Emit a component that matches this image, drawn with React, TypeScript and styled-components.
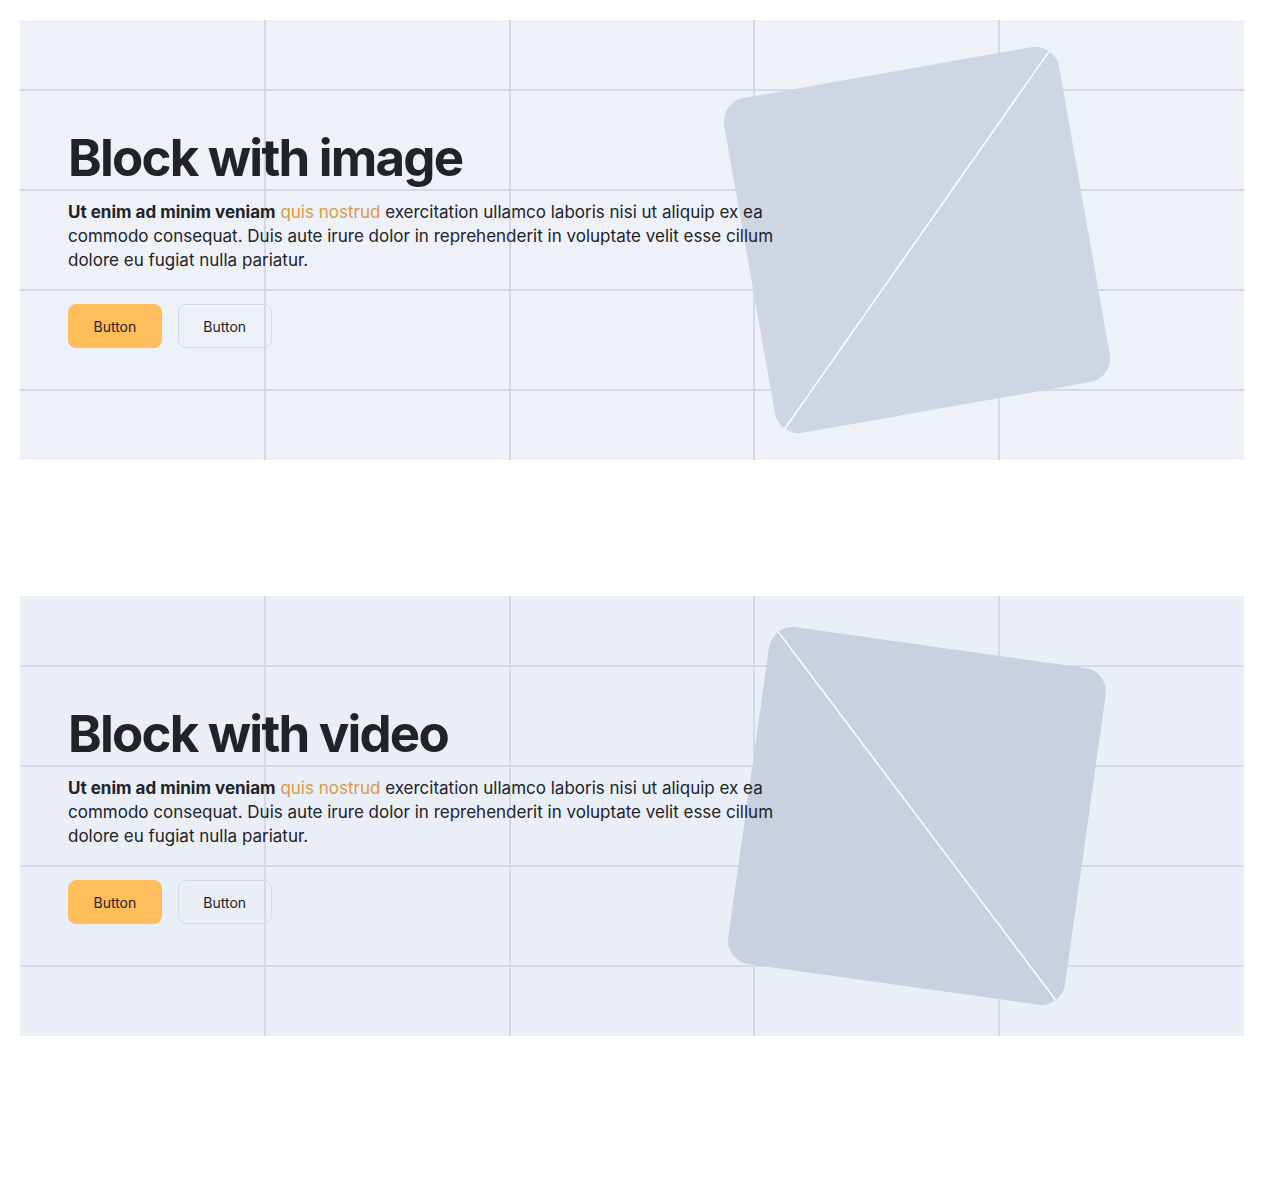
import React from "react";
import styled, { createGlobalStyle } from "styled-components";

const GlobalStyle = createGlobalStyle`
  html, body {
    margin: 0;
    padding: 0;
    background: #ffffff;
  }
  body {
    font-family: Inter, "Noto Sans", "Liberation Sans", sans-serif;
    color: #222326;
    -webkit-font-smoothing: antialiased;
  }
`;

const Page = styled.main`
  display: flex;
  flex-direction: column;
  gap: 136px;
  padding: 20px 20px 156px;
`;

const GRID = "#d3d9e6";

const Hero = styled.section<{ $bg: string }>`
  display: grid;
  grid-template-columns: 1fr;
  grid-template-rows: 440px;
  overflow: hidden;
  background-color: ${(p) => p.$bg};
  background-image:
    linear-gradient(
      to right,
      transparent calc(20% - 1px), ${GRID} calc(20% - 1px), ${GRID} calc(20% + 1px), transparent calc(20% + 1px),
      transparent calc(40% - 1px), ${GRID} calc(40% - 1px), ${GRID} calc(40% + 1px), transparent calc(40% + 1px),
      transparent calc(60% - 1px), ${GRID} calc(60% - 1px), ${GRID} calc(60% + 1px), transparent calc(60% + 1px),
      transparent calc(80% - 1px), ${GRID} calc(80% - 1px), ${GRID} calc(80% + 1px), transparent calc(80% + 1px)
    ),
    repeating-linear-gradient(
      to bottom,
      transparent 0 69px,
      ${GRID} 69px 71px,
      transparent 71px 100px
    );
`;

const Media = styled.div<{ $angle: number; $fill: string }>`
  grid-area: 1 / 1;
  justify-self: end;
  align-self: center;
  margin-right: 157px;
  width: 340px;
  height: 340px;
  border-radius: 24px;
  overflow: hidden;
  background: ${(p) => p.$fill};
  transform: rotate(${(p) => p.$angle}deg);
`;

const Diagonal = styled.svg`
  display: block;
  width: 100%;
  height: 100%;
`;

const Content = styled.div`
  grid-area: 1 / 1;
  align-self: center;
  position: relative;
  z-index: 1;
  padding-left: 48px;
  display: flex;
  flex-direction: column;
`;

const Title = styled.h1`
  margin: 0;
  font-family: Inter, "Noto Sans", "Liberation Sans", sans-serif;
  font-size: 51px;
  line-height: 52px;
  font-weight: 700;
  letter-spacing: -0.035em;
  color: #222326;
`;

const Lead = styled.p`
  margin: 16px 0 0;
  max-width: 720px;
  font-size: 17px;
  line-height: 24px;
  font-weight: 400;
  color: #222326;
`;

const Strong = styled.strong`
  font-weight: 700;
`;

const Accent = styled.span`
  color: #d69a48;
`;

const Actions = styled.div`
  display: flex;
  gap: 16px;
  margin-top: 32px;
`;

const Button = styled.button<{ $primary?: boolean }>`
  height: 44px;
  padding: 0 24.5px;
  border-radius: 8px;
  font-family: Inter, "Noto Sans", "Liberation Sans", sans-serif;
  font-size: 14px;
  font-weight: 400;
  color: #1f2024;
  cursor: pointer;
  background: ${(p) => (p.$primary ? "#ffbe5b" : "transparent")};
  border: 1px solid ${(p) => (p.$primary ? "#ffbe5b" : "#d4d9e2")};
`;

type BlockProps = {
  title: string;
  bg: string;
  fill: string;
  angle: number;
  flip?: boolean;
};

function Block({ title, bg, fill, angle, flip }: BlockProps) {
  return (
    <Hero $bg={bg}>
      <Media $angle={angle} $fill={fill}>
        <Diagonal viewBox="0 0 100 100" preserveAspectRatio="none">
          <line
            x1={flip ? 0 : 100}
            y1={0}
            x2={flip ? 100 : 0}
            y2={100}
            stroke="#ffffff"
            strokeWidth={1.6}
            vectorEffect="non-scaling-stroke"
            opacity={0.9}
          />
        </Diagonal>
      </Media>
      <Content>
        <Title>{title}</Title>
        <Lead>
          <Strong>Ut enim ad minim veniam</Strong> <Accent>quis nostrud</Accent>{" "}
          exercitation ullamco laboris nisi ut aliquip ex ea commodo consequat. Duis aute
          irure dolor in reprehenderit in voluptate velit esse cillum dolore eu fugiat nulla
          pariatur.
        </Lead>
        <Actions>
          <Button $primary>Button</Button>
          <Button>Button</Button>
        </Actions>
      </Content>
    </Hero>
  );
}

export default function App() {
  return (
    <>
      <GlobalStyle />
      <Page>
        <Block title="Block with image" bg="#eef1f8" fill="#cfd6e3" angle={-10} />
        <Block title="Block with video" bg="#eaeef6" fill="#c9d0df" angle={8} flip />
      </Page>
    </>
  );
}
